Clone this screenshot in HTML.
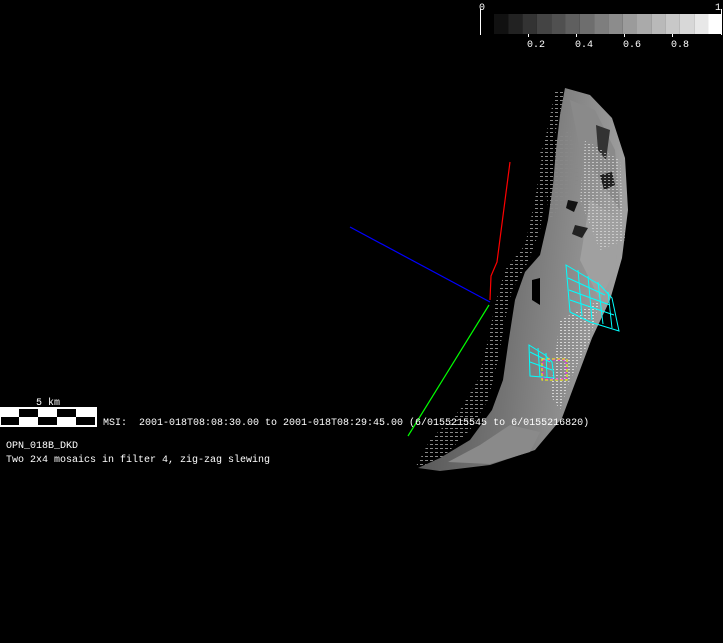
<!DOCTYPE html>
<html><head><meta charset="utf-8"><style>
html,body{margin:0;padding:0;background:#000;width:723px;height:643px;overflow:hidden}
svg{position:absolute;left:0;top:0}
text{font-family:"Liberation Mono","DejaVu Sans Mono",monospace;font-size:10px;fill:#fff}
</style></head><body>
<svg width="723" height="643" viewBox="0 0 723 643">
<defs>
<linearGradient id="g" x1="0" y1="0" x2="1" y2="0.2">
<stop offset="0" stop-color="#4a4a4a"/><stop offset="0.55" stop-color="#747474"/><stop offset="1" stop-color="#a0a0a0"/>
</linearGradient>
<pattern id="dots" width="4" height="3" patternUnits="userSpaceOnUse">
<rect x="0" y="0" width="2" height="1" fill="#ddd"/>
</pattern>
<pattern id="gdots" width="5" height="4" patternUnits="userSpaceOnUse">
<rect x="0" y="0" width="3" height="1" fill="#888"/>
</pattern>
</defs>
<!-- dotted fringe -->
<path d="M555,92 L565,92 L556,130 L548,180 L540,230 L528,262 L512,290 L505,320 L498,360 L488,400 L470,430 L440,460 L415,468 L430,440 L460,410 L478,380 L488,340 L495,305 L505,270 L525,245 L535,200 L543,150 Z" fill="url(#gdots)"/>
<!-- asteroid -->
<path d="M565,88 L590,95 L612,118 L625,158 L628,210 L622,258 L610,300 L592,338 L577,378 L562,418 L535,450 L490,465 L440,471 L418,468 L440,458 L470,440 L492,410 L503,380 L508,345 L515,300 L525,272 L540,255 L548,220 L553,185 L556,150 L560,115 Z" fill="url(#g)"/>
<path d="M570,100 L595,110 L615,150 L620,210 L600,180 L580,150 Z" fill="#8a8a8a"/>
<path d="M590,200 L620,220 L615,270 L600,300 L580,260 Z" fill="#a0a0a0"/>
<path d="M596,125 L610,130 L606,160 L598,150 Z" fill="#333"/>
<path d="M600,175 L612,172 L615,185 L604,190 Z" fill="#222"/>
<path d="M568,200 L578,202 L574,212 L566,208 Z" fill="#111"/>
<path d="M575,225 L588,228 L582,238 L572,234 Z" fill="#222"/>
<path d="M532,280 L540,278 L540,305 L532,300 Z" fill="#000"/>
<path d="M448,462 L480,445 L510,425 L540,432 L530,452 L490,464 Z" fill="#8a8a8a"/>
<path d="M560,320 L600,300 L590,340 L570,380 L560,410 L550,395 Z" fill="url(#dots)" opacity="0.9"/>
<path d="M585,140 L620,160 L625,240 L600,250 L580,200 Z" fill="url(#dots)" opacity="0.7"/>
<path d="M540,150 L570,130 L580,180 L550,220 Z" fill="url(#gdots)"/>
<!-- axes -->
<polyline points="510,162 497,262 491,276 490,300" fill="none" stroke="#f00" stroke-width="1.2"/>
<line x1="350" y1="227" x2="490" y2="302" stroke="#00f" stroke-width="1.2"/>
<line x1="489" y1="305" x2="408" y2="436" stroke="#0f0" stroke-width="1.2"/>
<!-- cyan grids -->
<g fill="none" stroke="#0ff" stroke-width="1">
<path d="M566,265 L600,285 L612,298 L619,331 L590,322 L570,312 Z"/>
<path d="M568,278 L605,295 M569,290 L610,305 M570,300 L614,315 M578,270 L582,316 M588,276 L592,320 M598,282 L603,324 M608,292 L612,328"/>
<path d="M529,345 L545,355 L552,362 L554,378 L530,376 Z"/>
<path d="M530,352 L550,362 M530,362 L552,370 M538,348 L540,377 M546,353 L547,377"/>
</g>
<rect x="542" y="359" width="25" height="21" fill="none" stroke="#ff0" stroke-width="1" stroke-dasharray="3,2"/>
<rect x="543" y="360" width="23" height="19" fill="none" stroke="#f0f" stroke-width="1" stroke-dasharray="2,3"/>
<!-- colorbar -->
<line x1="480.5" y1="9" x2="480.5" y2="35" stroke="#fff"/>
<line x1="721.5" y1="9" x2="721.5" y2="35" stroke="#fff"/>
<g>
<rect x="494" y="14" width="14.3" height="20" fill="#111"/>
<rect x="508.3" y="14" width="14.3" height="20" fill="#222"/>
<rect x="522.6" y="14" width="14.3" height="20" fill="#333"/>
<rect x="536.9" y="14" width="14.3" height="20" fill="#444"/>
<rect x="551.2" y="14" width="14.3" height="20" fill="#505050"/>
<rect x="565.5" y="14" width="14.3" height="20" fill="#5f5f5f"/>
<rect x="579.8" y="14" width="14.3" height="20" fill="#6e6e6e"/>
<rect x="594.1" y="14" width="14.3" height="20" fill="#7e7e7e"/>
<rect x="608.4" y="14" width="14.3" height="20" fill="#8c8c8c"/>
<rect x="622.7" y="14" width="14.3" height="20" fill="#9b9b9b"/>
<rect x="637" y="14" width="14.3" height="20" fill="#aaa"/>
<rect x="651.3" y="14" width="14.3" height="20" fill="#b9b9b9"/>
<rect x="665.6" y="14" width="14.3" height="20" fill="#c8c8c8"/>
<rect x="679.9" y="14" width="14.3" height="20" fill="#d8d8d8"/>
<rect x="694.2" y="14" width="14.3" height="20" fill="#e8e8e8"/>
<rect x="708.5" y="14" width="13.5" height="20" fill="#fff"/>
</g>
<g stroke="#fff"><line x1="528.5" y1="34" x2="528.5" y2="37"/><line x1="576.5" y1="34" x2="576.5" y2="37"/><line x1="624.5" y1="34" x2="624.5" y2="37"/><line x1="672.5" y1="34" x2="672.5" y2="37"/></g>
<text x="479" y="10">0</text><text x="715" y="10">1</text>
<text x="527" y="47">0.2</text><text x="575" y="47">0.4</text><text x="623" y="47">0.6</text><text x="671" y="47">0.8</text>
<!-- scale bar -->
<rect x="0.5" y="407.5" width="96" height="19" fill="#fff" stroke="#fff"/>
<rect x="19" y="409" width="19" height="8" fill="#000"/><rect x="57" y="409" width="19" height="8" fill="#000"/>
<rect x="1" y="417" width="18" height="8" fill="#000"/><rect x="38" y="417" width="19" height="8" fill="#000"/><rect x="76" y="417" width="19" height="8" fill="#000"/>
<text x="36" y="405">5 km</text>
<text x="103" y="425" xml:space="preserve">MSI:  2001-018T08:08:30.00 to 2001-018T08:29:45.00 (6/0155215545 to 6/0155216820)</text>
<text x="6" y="448">OPN_018B_DKD</text>
<text x="6" y="462">Two 2x4 mosaics in filter 4, zig-zag slewing</text>
</svg>
</body></html>
